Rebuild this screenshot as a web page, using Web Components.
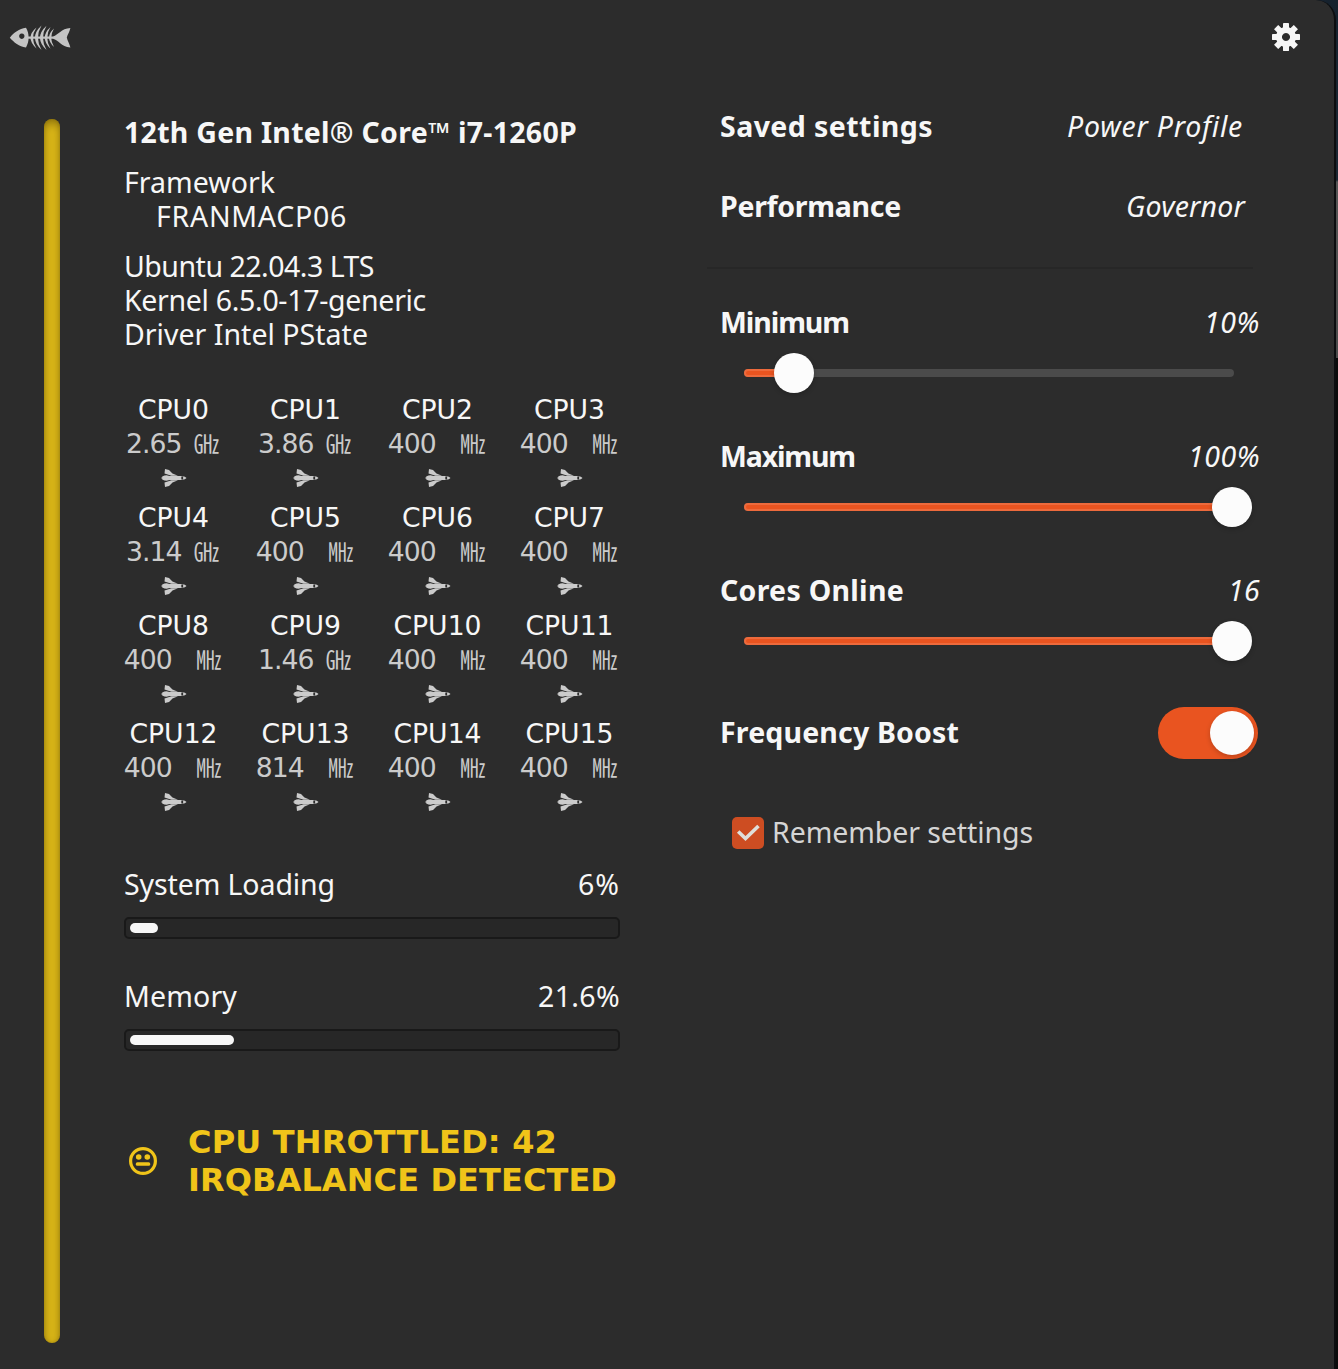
<!DOCTYPE html>
<html lang="en">
<head>
<meta charset="utf-8">
<title>CPU Power Manager</title>
<style>
  html, body {
    margin: 0;
    height: 100%;
    overflow: hidden;
    background: #000;
  }
  body {
    font: 28.5px/34px "Noto Sans", sans-serif;
    color: #f7f7f7;
  }
</style>
</head>
<body>
<power-app></power-app>

<script>
function render(el, html) {
  const template = document.createElement("template");
  template.innerHTML = html;
  el.attachShadow({ mode: "open" }).appendChild(template.content.cloneNode(true));
}

// One line of text whose letters are spaced out to fill the given width
class FitText extends HTMLElement {
  connectedCallback() {
    render(this, `
      <style>
        :host { display: block; white-space: nowrap; }
        span { display: inline-block; vertical-align: top; }
      </style>
      <span><slot></slot></span>
    `);
    const span = this.shadowRoot.querySelector("span");
    const width = Number(this.getAttribute("width"));
    const count = this.textContent.length;
    if (!width || !count) return;
    const spacing = (width - span.getBoundingClientRect().width) / count;
    span.style.letterSpacing = spacing.toFixed(3) + "px";
  }
}

class AppHeader extends HTMLElement {
  connectedCallback() {
    const teeth = [0, 45, 90, 135, 180, 225, 270, 315]
      .map((a) => `<rect x="-3" y="-14" width="6" height="8" rx=".4" transform="rotate(${a})"/>`)
      .join("");
    render(this, `
      <style>
        :host {
          display: flex;
          justify-content: space-between;
          padding: 23px 34px 0 9px;
          height: 85px;
          box-sizing: border-box;
        }
        svg { display: block; }
      </style>
      <svg width="62" height="29" viewBox="0 0 62 29" fill="#c4c4c4">
        <path fill-rule="evenodd" d="M.8 14.800C5 9.500 10 6 17 4.800c1.700 3 2.600 6 2.600 9.800s-.9 6.800-2.600 10C10 23.500 5 19.500 .8 14.800zM12.800 10.500a2.700 2.700 0 1 0 .01 0z"/>
        <path d="M19 13.500H44C49.500 12 52 5.500 61.400 5 60.500 9 58.500 11.500 57.800 14.600 58.500 18 60.500 20.500 61.400 24.500 52 23.500 49.500 17 44 15.700H19z"/>
        <path d="M27.500 4.500Q15.500 14.500 27.500 25.500Q20.500 14.500 27.500 4.500"/>
        <path d="M32.500 2.500Q19.500 14.500 32.500 27Q25.500 14.500 32.500 2.500"/>
        <path d="M37.500 2.700Q24.500 14.500 37.500 27Q30.500 14.500 37.500 2.700"/>
        <path d="M41.500 4Q30 14.500 41.500 25.800Q35 14.500 41.500 4"/>
        <path d="M45 5.500Q35 14.500 45 24Q39.500 14.500 45 5.500"/>
      </svg>
      <svg width="28" height="28" viewBox="-14 -14 28 28" fill="#f7f7f7">
        ${teeth}
        <path fill-rule="evenodd" d="M0-10a10 10 0 1 0 .01 0zM0-4a4 4 0 1 1-.01 0z"/>
      </svg>
    `);
  }
}

class CpuCell extends HTMLElement {
  connectedCallback() {
    const name = this.getAttribute("name");
    const [value, unit] = this.getAttribute("freq").split(" ");
    render(this, `
      <style>
        :host {
          display: flex;
          flex-direction: column;
          align-items: center;
          width: 100px;
          font: 26.67px/34px "DejaVu Sans", sans-serif;
        }
        .freq { display: flex; color: #cbcbcb; gap: 12px; height: 34px; letter-spacing: -1px; margin-left: -3px; }
        .freq.wide { gap: 24px; }
        .unit { font: 350 25.500px/30px "Noto Sans CJK JP", sans-serif; }
        .icon { display: flex; align-items: center; height: 34px; }
      </style>
      <div>${name}</div>
      <div class="freq ${unit === "㎒" ? "wide" : ""}"><span>${value}</span><span class="unit">${unit}</span></div>
      <div class="icon">
        <svg width="26" height="20" viewBox="0 0 26 20" fill="#cbcbcb">
          <path fill-rule="evenodd" d="M3.500 7.500 5.500 7.300 8.500 7.900H21Q24.500 8.300 25.500 10 24.500 11.700 21 12.100H8.500L5.500 12.700 3.500 12.500 1.200 11.500V10.600L0 10.300V9.700L1.200 9.400V8.500zM20.300 8.600v2.800h1.800V8.600z"/>
          <path d="M4 1 8 2 11.500 5.600 17 7.700H10.500L3.500 5.500zM4 19 8 18 11.500 14.400 17 12.300H10.500L3.500 14.500z"/>
        </svg>
      </div>
    `);
  }
}

class CpuGrid extends HTMLElement {
  connectedCallback() {
    const freqs = [
      "2.65 ㎓", "3.86 ㎓", "400 ㎒", "400 ㎒",
      "3.14 ㎓", "400 ㎒", "400 ㎒", "400 ㎒",
      "400 ㎒", "1.46 ㎓", "400 ㎒", "400 ㎒",
      "400 ㎒", "814 ㎒", "400 ㎒", "400 ㎒",
    ];
    render(this, `
      <style>
        :host {
          display: grid;
          grid-template-columns: repeat(4, 100px);
          gap: 6px 32px;
        }
      </style>
      ${freqs.map((f, i) => `<cpu-cell name="CPU${i}" freq="${f}"></cpu-cell>`).join("")}
    `);
  }
}

class LevelMeter extends HTMLElement {
  connectedCallback() {
    render(this, `
      <style>
        :host { display: block; }
        .row { display: flex; justify-content: space-between; height: 33px; padding-top: 1px; margin-bottom: 17px; }
        .bar {
          box-sizing: border-box;
          height: 22px;
          padding: 4px;
          border: 2px solid #191919;
          border-radius: 5px;
          background: #272727;
        }
        .fill { height: 10px; border-radius: 5px; background: #f7f7f7; width: ${this.getAttribute("fill")}px; }
      </style>
      <div class="row"><slot></slot><slot name="value"></slot></div>
      <div class="bar"><div class="fill"></div></div>
    `);
  }
}

class StatusAlert extends HTMLElement {
  connectedCallback() {
    render(this, `
      <style>
        :host {
          display: flex;
          align-items: center;
          gap: 31px;
          padding-left: 5px;
          color: #f0c419;
          font: bold 32px/38px "DejaVu Sans", sans-serif;
        }
      </style>
      <svg width="28" height="28" viewBox="0 0 28 28" fill="currentColor">
        <circle cx="14" cy="14" r="12.400" fill="none" stroke="currentColor" stroke-width="3.200"/>
        <circle cx="9.700" cy="10" r="2.800"/>
        <circle cx="18.300" cy="10" r="2.800"/>
        <rect x="6.800" y="15.300" width="14.400" height="3.400" rx="1.500"/>
      </svg>
      <div><slot></slot></div>
    `);
  }
}

class SettingRow extends HTMLElement {
  connectedCallback() {
    render(this, `
      <style>
        :host { display: flex; justify-content: space-between; height: 34px; }
        .name, .value { padding-top: 1px; }
        .name { font-weight: 700; }
        .value { font-style: italic; }
      </style>
      <div class="name"><slot></slot></div>
      <div class="value"><slot name="value"></slot></div>
    `);
  }
}

class RangeSlider extends HTMLElement {
  connectedCallback() {
    const knob = 1.4 + 4.866 * Number(this.getAttribute("value"));
    render(this, `
      <style>
        :host { display: block; padding: 31px 26px 0 24px; height: 100px; box-sizing: border-box; }
        .track { position: relative; height: 8px; border-radius: 4px; background: #4b4b4b; }
        .fill {
          box-sizing: border-box;
          height: 8px;
          border: 2px solid #ed6a3c;
          border-radius: 4px;
          background: #e95420;
          width: ${knob}px;
        }
        .knob {
          position: absolute;
          top: -16px;
          left: ${knob - 20}px;
          width: 40px;
          height: 40px;
          border-radius: 50%;
          background: #fcfcfc;
          box-shadow: 0 2px 5px rgba(0, 0, 0, .2);
        }
      </style>
      <div class="track"><div class="fill"></div><div class="knob"></div></div>
    `);
  }
}

class ToggleSwitch extends HTMLElement {
  connectedCallback() {
    render(this, `
      <style>
        :host {
          display: flex;
          justify-content: flex-end;
          box-sizing: border-box;
          width: 100px;
          height: 52px;
          padding: 4px;
          border-radius: 26px;
          background: #e95420;
        }
        .knob {
          width: 44px;
          height: 44px;
          border-radius: 50%;
          background: #fcfcfc;
          box-shadow: 0 2px 5px rgba(0, 0, 0, .2);
        }
      </style>
      <div class="knob"></div>
    `);
  }
}

class CheckOption extends HTMLElement {
  connectedCallback() {
    render(this, `
      <style>
        :host { display: flex; align-items: center; gap: 8px; color: #d5d5d5; }
        .label { margin-bottom: 2px; }
      </style>
      <svg width="32" height="32" viewBox="0 0 32 32">
        <rect width="32" height="32" rx="5" fill="#cd4d22"/>
        <path d="M6.200 14.500 13.500 21.500 26.500 9" fill="none" stroke="#dfdfda" stroke-width="3.600"/>
      </svg>
      <div class="label"><slot></slot></div>
    `);
  }
}

class PowerApp extends HTMLElement {
  connectedCallback() {
    render(this, `
      <style>
        :host {
          display: block;
          height: 1369px;
          background: linear-gradient(#16222e, #1c2733 180px, #555 182px, #4a4a4a 358px, #0b0b0b 358px);
        }
        .window {
          width: 1334px;
          height: 1369px;
          background: #2c2c2c;
          border-right: 2px solid #0c0d0f;
          border-top-right-radius: 20px;
        }
        .content { display: flex; align-items: flex-start; padding-left: 44px; }
        .gauge {
          width: 16px;
          height: 1224px;
          margin-top: 34px;
          border-radius: 8px;
          background: #dab617;
          box-shadow: inset 0 4px 8px rgba(60, 45, 0, .45), inset 0 0 3px rgba(60, 45, 0, .2);
        }
        .left { width: 496px; margin: 30px 0 0 64px; }
        .title { font-weight: 700; margin-bottom: 16px; }
        .model { padding-left: 32px; margin-bottom: 16px; }
        cpu-grid { margin: 42px 0 0 -.5px; }
        level-meter { margin-top: 39px; }
        cpu-grid + level-meter { margin-top: 47px; }
        status-alert { margin-top: 72px; }
        .right { width: 540px; margin: 23px 0 0 100px; }
        .right setting-row.profile { padding-right: 17px; margin-bottom: 46px; }
        .right setting-row.governor { padding-right: 15px; }
        hr { border: 0; height: 2px; margin: 45px 7px 35px -13px; background: #272727; }
        .boost { display: flex; justify-content: space-between; align-items: center; padding-right: 2px; margin-top: 1px; }
        .boost setting-row { margin-bottom: 4px; }
        check-option { margin: 56px 0 0 12px; }
      </style>
      <div class="window">
        <app-header></app-header>
        <div class="content">
          <div class="gauge"></div>
          <div class="left">
            <fit-text class="title" width="453">12th Gen Intel® Core™ i7-1260P</fit-text>
            <fit-text width="151">Framework</fit-text>
            <fit-text class="model" width="191">FRANMACP06</fit-text>
            <fit-text width="250">Ubuntu 22.04.3 LTS</fit-text>
            <fit-text width="302">Kernel 6.5.0-17-generic</fit-text>
            <fit-text width="244">Driver Intel PState</fit-text>
            <cpu-grid></cpu-grid>
            <level-meter fill="28">
              <fit-text width="211">System Loading</fit-text>
              <fit-text slot="value" width="42">6%</fit-text>
            </level-meter>
            <level-meter fill="104">
              <fit-text width="113">Memory</fit-text>
              <fit-text slot="value" width="82">21.6%</fit-text>
            </level-meter>
            <status-alert>
              <fit-text width="369">CPU THROTTLED: 42</fit-text>
              <fit-text width="429">IRQBALANCE DETECTED</fit-text>
            </status-alert>
          </div>
          <div class="right">
            <setting-row class="profile">
              <fit-text width="213">Saved settings</fit-text>
              <fit-text slot="value" width="176">Power Profile</fit-text>
            </setting-row>
            <setting-row class="governor">
              <fit-text width="181">Performance</fit-text>
              <fit-text slot="value" width="119">Governor</fit-text>
            </setting-row>
            <hr>
            <setting-row>
              <fit-text width="129">Minimum</fit-text>
              <fit-text slot="value" width="56">10%</fit-text>
            </setting-row>
            <range-slider value="10"></range-slider>
            <setting-row>
              <fit-text width="135">Maximum</fit-text>
              <fit-text slot="value" width="72">100%</fit-text>
            </setting-row>
            <range-slider value="100"></range-slider>
            <setting-row>
              <fit-text width="184">Cores Online</fit-text>
              <fit-text slot="value" width="32">16</fit-text>
            </setting-row>
            <range-slider value="100"></range-slider>
            <div class="boost">
              <setting-row><fit-text width="239">Frequency Boost</fit-text></setting-row>
              <toggle-switch></toggle-switch>
            </div>
            <check-option><fit-text width="261">Remember settings</fit-text></check-option>
          </div>
        </div>
      </div>
    `);
  }
}

customElements.define("fit-text", FitText);
customElements.define("app-header", AppHeader);
customElements.define("cpu-cell", CpuCell);
customElements.define("cpu-grid", CpuGrid);
customElements.define("level-meter", LevelMeter);
customElements.define("status-alert", StatusAlert);
customElements.define("setting-row", SettingRow);
customElements.define("range-slider", RangeSlider);
customElements.define("toggle-switch", ToggleSwitch);
customElements.define("check-option", CheckOption);
customElements.define("power-app", PowerApp);
</script>
</body>
</html>
